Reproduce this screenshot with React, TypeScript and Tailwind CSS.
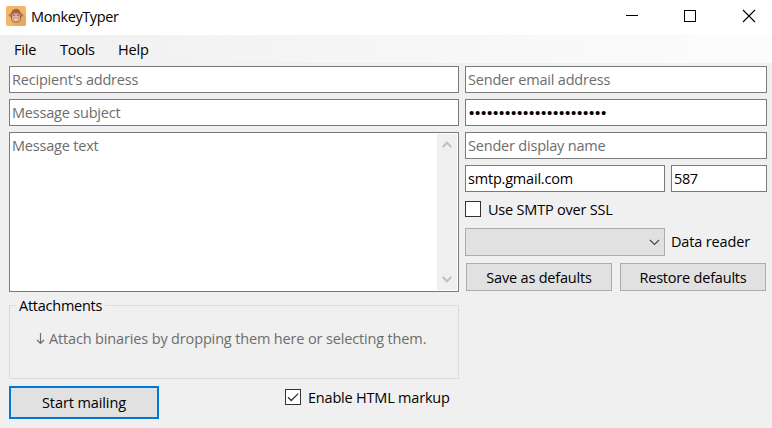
import type { ReactNode } from "react";

function Field({ children, className = "", muted = false }: { children: ReactNode; className?: string; muted?: boolean }) {
  return (
    <div className={`h-[27px] border border-[#7a7a7a] bg-white pl-[2px] pt-[3px] ${muted ? "text-[#6d6d6d]" : "text-black"} ${className}`}>
      {children}
    </div>
  );
}

function CheckBox({ checked = false }: { checked?: boolean }) {
  return (
    <span className="block size-4 shrink-0 border border-[#333] bg-white">
      {checked && (
        <svg viewBox="0 0 14 14" className="size-[14px]" fill="none" stroke="#333" strokeWidth="1.3">
          <path d="M2 7.2 L5.3 10.5 L12.2 3.6" />
        </svg>
      )}
    </span>
  );
}

function MonkeyIcon() {
  return (
    <svg viewBox="0 0 20 20" className="size-5">
      <rect width="20" height="20" rx="1.8" fill="#f2b866" />
      <path d="M5 16 L16 6 L20 10 V18.2 Q20 20 18.2 20 H8Z" fill="#e5aa5d" />
      <circle cx="4.6" cy="9.3" r="1.8" fill="#bd7a58" />
      <circle cx="15.4" cy="9.3" r="1.8" fill="#bd7a58" />
      <path d="M10 2.8 C6.5 3 5 5.6 5 9 V11.5 C4.6 14.6 7 16.6 10 16.6 S15.4 14.6 15 11.5 V9 C15 5.6 13.5 3 10 2.8Z" fill="#a4604a" />
      <path d="M10 7.8 C8.5 6.5 6.2 7.3 6.2 9.4 C6.2 10.4 6.5 11 6 12.2 C5.6 14.5 7.7 15.8 10 15.8 S14.4 14.5 14 12.2 C13.5 11 13.8 10.4 13.8 9.4 C13.8 7.3 11.5 6.5 10 7.8Z" fill="#dfb59a" />
      <circle cx="8" cy="9.3" r="0.8" fill="#6b4238" />
      <circle cx="12" cy="9.3" r="0.8" fill="#6b4238" />
      <path d="M7.6 12.4 H12.4 Q12 14.6 10 14.6 T7.6 12.4Z" fill="#fff" stroke="#a4604a" strokeWidth="0.5" />
    </svg>
  );
}

function TitleBar() {
  return (
    <header className="flex h-[35px] justify-between bg-white">
      <div className="flex pl-[6px] pt-[6px]">
        <MonkeyIcon />
        <span className="ml-[5px] pt-px tracking-[-0.4px]">MonkeyTyper</span>
      </div>
      <svg viewBox="0 0 150 35" className="h-[35px] w-[150px]" fill="none" stroke="#000" shapeRendering="crispEdges">
        <path d="M4 15.5H16" />
        <rect x="62.5" y="10.5" width="11" height="11" />
        <path d="M121 10L133 22M133 10L121 22" shapeRendering="auto" strokeWidth="1.1" />
      </svg>
    </header>
  );
}

function MenuBar() {
  return (
    <nav className="flex h-7 bg-gradient-to-r from-[#f0f0f0] to-[#fcfcfc] pl-[14px] pt-[5px]">
      <span className="w-[46px] tracking-[-0.2px]">File</span>
      <span className="w-[58px] tracking-[-0.25px]">Tools</span>
      <span>Help</span>
    </nav>
  );
}

export default function App() {
  return (
    <div className="h-[428px] w-[772px] overflow-hidden whitespace-nowrap bg-[#f0f0f0] font-['Open_Sans','Noto_Sans',sans-serif] text-[14.5px] leading-5 tracking-[-0.2px] text-black">
      <TitleBar />
      <MenuBar />
      <main className="flex gap-[6px] pl-[9px] pt-[3px]">
        <section className="w-[450px]">
          <div className="flex flex-col gap-[6px]">
            <Field muted>Recipient's address</Field>
            <Field muted>Message subject</Field>
            <div className="flex h-[160px] justify-between border border-[#7a7a7a] bg-white p-px text-[#6d6d6d]">
              <span className="pl-px pt-[2px]">Message text</span>
              <div className="flex w-5 flex-col items-center justify-between bg-[#f0f0f0] py-[7px]">
                <svg viewBox="0 0 10 7" className="h-[7px] w-[10px]" fill="none" stroke="#bfbfbf" strokeWidth="2"><path d="M.7 6L5 1.7L9.3 6" /></svg>
                <svg viewBox="0 0 10 7" className="h-[7px] w-[10px]" fill="none" stroke="#bfbfbf" strokeWidth="2"><path d="M.7 1L5 5.3L9.3 1" /></svg>
              </div>
            </div>
          </div>
          <fieldset className="mt-[3px] h-[84px]">
            <div className="flex h-[21px] items-start">
              <span className="mt-[10px] h-px w-[7px] bg-[#dcdcdc]" />
              <span className="w-[89px] pl-[3px] pt-px tracking-[-0.25px]">Attachments</span>
              <span className="mt-[10px] h-px flex-1 bg-[#dcdcdc]" />
            </div>
            <div className="-mt-[11px] flex h-[74px] border-x border-b border-[#dcdcdc] pl-[25px] pt-[24px] text-[#6d6d6d]">
              <svg viewBox="0 0 14 20" className="h-5 w-[14px]" fill="none" stroke="#6d6d6d" strokeWidth="1.2">
                <path d="M5.5 4V14.5M2 11L5.5 14.5L9 11" />
              </svg>
              <span className="tracking-[-0.15px]">Attach binaries by dropping them here or selecting them.</span>
            </div>
          </fieldset>
          <div className="mt-[7px] flex">
            <button className="flex h-[33px] w-[150px] justify-center border-2 border-[#0078d7] bg-[#e1e1e1] pt-[5px] tracking-[-0.1px]">Start mailing</button>
            <div className="ml-[126px] flex pt-[3px]">
              <CheckBox checked />
              <span className="-mt-px ml-[7px]">Enable HTML markup</span>
            </div>
          </div>
        </section>
        <section className="w-[302px]">
          <div className="flex flex-col gap-[6px]">
            <Field muted>Sender email address</Field>
            <Field className="flex items-center !pt-0 !pl-[3px]">
              <span className="font-['Liberation_Sans',sans-serif] text-[15px] tracking-[0.75px]">•••••••••••••••••••••••</span>
            </Field>
            <Field muted>Sender display name</Field>
            <div className="flex gap-[6px]">
              <Field className="w-[200px]">smtp.gmail.com</Field>
              <Field className="w-[96px] tracking-[-0.4px]">587</Field>
            </div>
          </div>
          <div className="mt-[9px] flex h-[27px]">
            <CheckBox />
            <span className="-mt-px ml-[7px]">Use SMTP over SSL</span>
          </div>
          <div className="flex h-7">
            <div className="flex w-[200px] items-center justify-end border border-[#acacac] bg-[#e1e1e1] pr-[4px]">
              <svg viewBox="0 0 11 7" className="h-[7px] w-[11px]" fill="none" stroke="#444" strokeWidth="1.1"><path d="M1 1L5.5 5.5L10 1" /></svg>
            </div>
            <span className="ml-[6px] pt-[4px] tracking-[-0.15px]">Data reader</span>
          </div>
          <div className="mt-[7px] flex gap-2 pl-px">
            <button className="flex h-7 w-[146px] justify-center border border-[#acacac] bg-[#e1e1e1] pt-[4px]">Save as defaults</button>
            <button className="flex h-7 w-[146px] justify-center border border-[#acacac] bg-[#e1e1e1] pt-[4px]">Restore defaults</button>
          </div>
        </section>
      </main>
    </div>
  );
}
